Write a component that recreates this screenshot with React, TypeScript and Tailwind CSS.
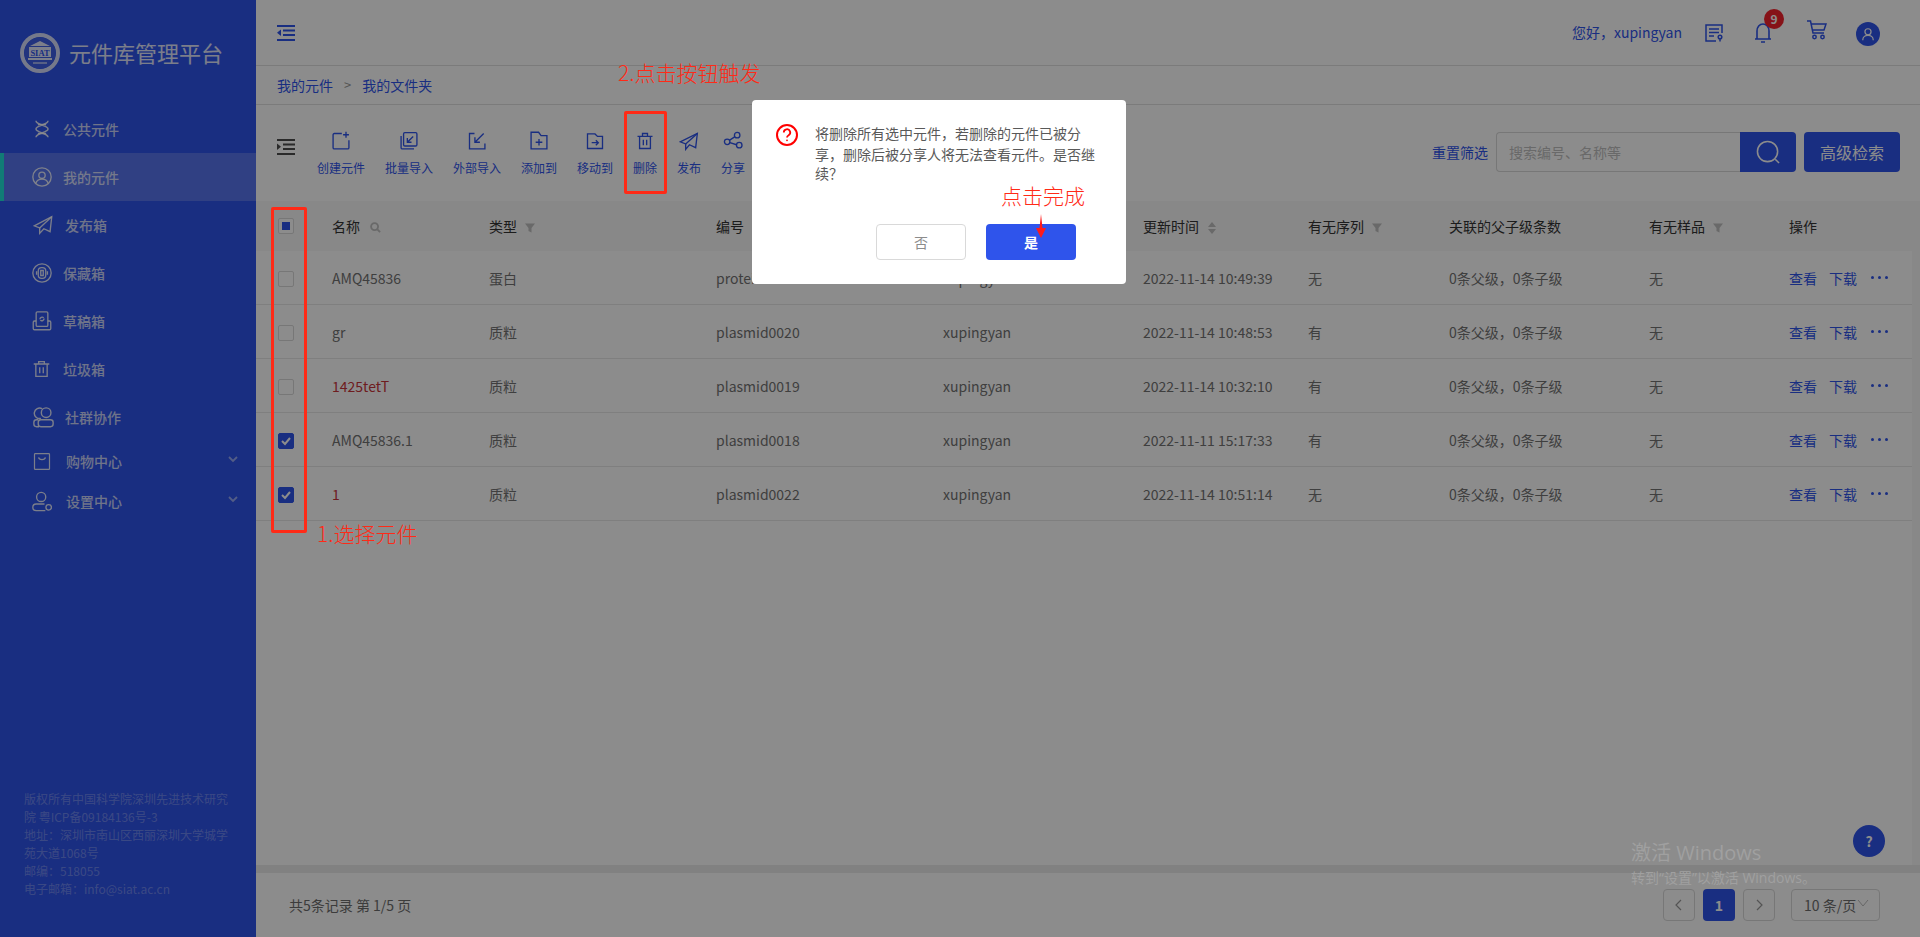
import React from "react";

const FONT = "font-['Noto_Sans_CJK_SC','Noto_Sans',sans-serif]";

type IP = { className?: string };
const S = ({ children, className, vb = "0 0 24 24" }: { children: React.ReactNode; className?: string; vb?: string }) => (
  <svg viewBox={vb} fill="none" stroke="currentColor" strokeWidth="1.6" className={className}>
    {children}
  </svg>
);

const Dna = (p: IP) => (
  <S {...p}><path d="M4 1c0 6 16 6 16 11S4 17 4 23M20 1c0 6-16 6-16 11s16 5 16 11" strokeWidth="2" /><path d="M6.500 6h11M6.500 18h11" strokeWidth="2" /></S>
);
const UserCircle = (p: IP) => (
  <S {...p}><circle cx="12" cy="12" r="11" /><circle cx="12" cy="10" r="3.800" /><path d="M4.500 20c1-4 4-5.500 7.500-5.500s6.500 1.500 7.500 5.500" /></S>
);
const Plane = (p: IP) => (
  <S {...p}><path d="M1.500 13 22.500 2l-2 18-7.500-3.500L8 22v-6.500z" /><path d="M22.500 2 8 15.500" /></S>
);
const Seal = (p: IP) => (
  <S {...p}><circle cx="12" cy="12" r="11" /><rect x="7.500" y="5.500" width="9" height="13" rx="4" /><path d="M10.500 9h3v6h-3zM5.500 10v4M18.500 10v4" /></S>
);
const Draft = (p: IP) => (
  <S {...p}><rect x="5" y="1" width="14" height="17.500" rx="1.500" /><path d="M5 12H3a1.500 1.500 0 0 0-1.500 1.500V21A1.500 1.500 0 0 0 3 22.500h18a1.500 1.500 0 0 0 1.500-1.500v-7.500A1.500 1.500 0 0 0 21 12h-2" /><path d="M9.500 10a2.700 2.700 0 0 1 4.500-2M14.500 9a2.700 2.700 0 0 1-4.500 2" /></S>
);
const Trash = (p: IP) => (
  <S {...p}><path d="M1 5h22M8 5V1.500h8V5M4 5v17.500h16V5M9.500 9.500V18M14.500 9.500V18" strokeWidth="1.900" /></S>
);
const Group = (p: IP) => (
  <S {...p}><circle cx="15" cy="6.500" r="5.500" /><path d="M9 13a6 6 0 1 1 1.500-11" /><rect x="6" y="14.500" width="17" height="8" rx="3" /><path d="M6 14.500H4a3 3 0 0 0-3 3v2a3 3 0 0 0 3 3h3" /></S>
);
const Bag = (p: IP) => (
  <S {...p}><rect x="2" y="1.500" width="20" height="21" rx="1" /><path d="M7.500 6.500c.5 4 8.500 4 9 0" /></S>
);
const UserSet = (p: IP) => (
  <S {...p}><circle cx="11" cy="6.500" r="5.500" /><path d="M15 15H5a3.700 3.700 0 0 0 0 8h11" /><circle cx="20" cy="19" r="3.300" /></S>
);
const Chevron = (p: IP) => (
  <S {...p} vb="0 0 12 12"><path d="m2 4 4 4 4-4" strokeWidth="1.800" /></S>
);
const Indent = (p: IP) => (
  <S {...p} vb="0 0 18 16"><path d="M0 1h18M6 5.500h12M6 10h12M0 15h18" strokeWidth="1.800" /><path d="M0 4.500 4 7.750 0 11z" fill="currentColor" stroke="none" /></S>
);
const Outdent = (p: IP) => (
  <S {...p} vb="0 0 18 16"><path d="M0 1h18M6 5.500h12M6 10h12M0 15h18" strokeWidth="1.800" /><path d="M4 4.500 0 7.750 4 11z" fill="currentColor" stroke="none" /></S>
);

const menu: { t: string; I: (p: IP) => React.ReactElement; ml: string; tl: string; h: string; active?: boolean; chev?: boolean; ic: string }[] = [
  { t: "公共元件", I: Dna, ml: "ml-[33px]", tl: "ml-[7px]", ic: "w-[18px] h-[18px]", h: "h-[48px]" },
  { t: "我的元件", I: UserCircle, ml: "ml-[32px]", tl: "ml-[8px]", ic: "w-[20px] h-[20px]", h: "h-[48px]", active: true },
  { t: "发布箱", I: Plane, ml: "ml-[33px]", tl: "ml-[9px]", ic: "w-[20px] h-[20px]", h: "h-[48px]" },
  { t: "保藏箱", I: Seal, ml: "ml-[32px]", tl: "ml-[8px]", ic: "w-[20px] h-[20px]", h: "h-[48px]" },
  { t: "草稿箱", I: Draft, ml: "ml-[32px]", tl: "ml-[8px]", ic: "w-[20px] h-[20px]", h: "h-[48px]" },
  { t: "垃圾箱", I: Trash, ml: "ml-[33px]", tl: "ml-[7px]", ic: "w-[17px] h-[18px]", h: "h-[48px]" },
  { t: "社群协作", I: Group, ml: "ml-[32px]", tl: "ml-[10px]", ic: "w-[23px] h-[21px]", h: "h-[48px]" },
  { t: "购物中心", I: Bag, ml: "ml-[33px]", tl: "ml-[10px]", ic: "w-[18px] h-[19px]", h: "h-[40px]", chev: true },
  { t: "设置中心", I: UserSet, ml: "ml-[32px]", tl: "ml-[11px]", ic: "w-[20px] h-[21px]", h: "h-[40px]", chev: true },
];

const Sidebar = () => (
  <aside className="w-[256px] shrink-0 h-[937px] bg-[#2f54eb] text-white/85 flex flex-col relative">
    <div className="h-[105px] flex items-start pl-[20px] pt-[33px]">
      <svg viewBox="0 0 40 40" className="w-[40px] h-[40px]">
        <circle cx="20" cy="20" r="18" fill="none" stroke="white" strokeOpacity=".8" strokeWidth="4" />
        <circle cx="20" cy="20" r="15.500" fill="#3f60e6" />
        <path d="M10 13h20l-10-5z" fill="white" fillOpacity=".85" />
        <rect x="9" y="14" width="22" height="10" fill="white" fillOpacity=".85" />
        <text x="20" y="23" textAnchor="middle" fontSize="8.500" fontWeight="700" fill="#2f54eb" fontFamily="Liberation Serif, serif">SIAT</text>
        <rect x="8" y="25" width="24" height="2" fill="white" fillOpacity=".85" />
        <rect x="13" y="29" width="14" height="2" fill="white" fillOpacity=".5" />
      </svg>
      <span className="ml-[9px] mt-[3px] text-[22px] leading-[32px] text-white/85">元件库管理平台</span>
    </div>
    {menu.map((m) => (
      <div key={m.t} className={`${m.h} flex items-center relative ${m.active ? "bg-white/20" : ""}`}>
        {m.active && <span className="absolute left-0 top-0 bottom-0 w-[4px] bg-[#1fe0d8]" />}
        <span className={`${m.ml} flex items-center w-[23px]`}><m.I className={`${m.ic} shrink-0`} /></span>
        <span className={`text-[14px] font-medium text-white/75 ${m.tl}`}>{m.t}</span>
        {m.chev && <Chevron className="absolute left-[227px] top-[12px] w-[12px] h-[12px] text-white/50" />}
      </div>
    ))}
    <div className="mt-auto mb-[39px] pl-[24px] w-[232px] text-[12px] leading-[18px] text-white/30">
      版权所有中国科学院深圳先进技术研究院 粤ICP备09184136号-3<br />
      地址：深圳市南山区西丽深圳大学城学苑大道1068号<br />
      邮编：518055<br />
      电子邮箱：info@siat.ac.cn
    </div>
  </aside>
);

const tools: { t: string; d: React.ReactNode }[] = [
  { t: "创建元件", d: <><path d="M13 3H4a1.500 1.500 0 0 0-1.500 1.500V20A1.500 1.500 0 0 0 4 21.500h16a1.500 1.500 0 0 0 1.500-1.500v-9" /><path d="M18 1v7M14.500 4.500h7" /></> },
  { t: "批量导入", d: <><rect x="5.500" y="2" width="16" height="16" rx="1.500" /><path d="M2.500 6v14a1.500 1.500 0 0 0 1.500 1.500h14" /><path d="M17 6.500 10 13.500M10 8.500v5h5" /></> },
  { t: "外部导入", d: <><path d="M9 3H3v18.500h18.500V15" /><path d="M20 3 9.500 13.500M9.500 7.500v6h6" /></> },
  { t: "添加到", d: <><path d="M2.500 1.500h9l3 4h7v16h-19z" /><path d="M12 9.500v8M8 13.500h8" /></> },
  { t: "移动到", d: <><path d="M3 3.500h9l3 3h6v14.500H3z" /><path d="M8 14h8M13 11l3 3-3 3" /></> },
  { t: "删除", d: <path d="M3 6.500h18M9 6.500V3h6v3.500M5.500 6.500V21h13V6.500M10 10.500v6.500M14 10.500v6.500" /> },
  { t: "发布", d: <><path d="M1.500 13 22 3l-2 17-7.500-3.500L8 22v-6.500z" /><path d="M22 3 8 15.500" /></> },
  { t: "分享", d: <><circle cx="17" cy="5" r="3.300" /><circle cx="5" cy="13" r="3.300" /><circle cx="19.500" cy="17" r="3.300" /><path d="m8 11 6-4M8.300 14l8 2.500" /></> },
];

const cols = "grid grid-cols-[76px_157px_227px_227px_200px_165px_141px_200px_140px_1fr] items-center";

const Funnel = () => (
  <svg viewBox="0 0 10 10" className="inline-block ml-[8px] w-[10px] h-[10px] text-[#bfbfbf]"><path d="M0 .5h10L6.500 5v4.500L3.500 8V5z" fill="currentColor" /></svg>
);
const SortIcon = () => (
  <svg viewBox="0 0 10 14" className="inline-block ml-[8px] w-[10px] h-[14px] text-[#bfbfbf]"><path d="M5 1 9 6H1zM5 13 1 8h8z" fill="currentColor" /></svg>
);
const Mag = () => (
  <svg viewBox="0 0 12 12" className="inline-block ml-[10px] w-[11px] h-[11px] text-[#bfbfbf]" fill="none" stroke="currentColor" strokeWidth="2"><circle cx="5" cy="5" r="3.800" /><path d="m8 8 3 3" /></svg>
);

const rows = [
  { n: "AMQ45836", ty: "蛋白", id: "protein0017", dt: "2022-11-14 10:49:39", s: "无", c: false, red: false },
  { n: "gr", ty: "质粒", id: "plasmid0020", dt: "2022-11-14 10:48:53", s: "有", c: false, red: false },
  { n: "1425tetT", ty: "质粒", id: "plasmid0019", dt: "2022-11-14 10:32:10", s: "有", c: false, red: true },
  { n: "AMQ45836.1", ty: "质粒", id: "plasmid0018", dt: "2022-11-11 15:17:33", s: "有", c: true, red: false },
  { n: "1", ty: "质粒", id: "plasmid0022", dt: "2022-11-14 10:51:14", s: "无", c: true, red: true },
];

const Check = ({ on }: { on: boolean }) => (
  <span className={`ml-[22px] w-[16px] h-[16px] rounded-[2px] flex items-center justify-center border ${on ? "bg-[#2f54eb] border-[#2f54eb]" : "bg-white border-[#d9d9d9]"}`}>
    {on && (
      <svg viewBox="0 0 12 12" className="w-[12px] h-[12px]" fill="none" stroke="white" strokeWidth="2"><path d="m2 6 3 3 5-6" /></svg>
    )}
  </span>
);

const Main = () => (
  <main className="flex-1 h-[937px] flex flex-col bg-white min-w-0">
    <header className="h-[66px] shrink-0 border-b border-[#e0e0e0] flex items-center pl-[21px] pr-[40px] text-[#2f54eb]">
      <Outdent className="w-[18px] h-[16px] text-[#2f54eb]" />
      <span className="ml-auto text-[14px] translate-x-[1px]">您好，xupingyan</span>
      <svg viewBox="0 0 18 18" className="ml-[24px] w-[18px] h-[18px]" fill="none" stroke="currentColor" strokeWidth="1.500"><path d="M17 9V1H1v16h10M4 5h10M4 8.500h10M4 12h5" /><circle cx="15" cy="13" r="1.800" /><path d="M15 15v2.500" /></svg>
      <span className="ml-[31px] relative w-[18px] h-[22px]">
        <svg viewBox="0 0 18 22" className="w-[18px] h-[22px]" fill="none" stroke="currentColor" strokeWidth="1.600"><path d="M3 17V9c0-4 2.500-7 6-7s6 3 6 7v8M1 17h16M7 20h4" /></svg>
        <span className="absolute left-[10px] -top-[13px] w-[20px] h-[20px] rounded-full bg-[#f5222d] text-white text-[12px] font-bold flex items-center justify-center">9</span>
      </span>
      <svg viewBox="0 0 20 20" className="ml-[35px] w-[20px] h-[20px] -translate-y-[3px]" fill="none" stroke="currentColor" strokeWidth="1.500"><path d="M0 1h3.500L6 13h11M4 4h15l-2 6H5.500" /><circle cx="7.500" cy="17" r="1.700" /><circle cx="15.500" cy="17" r="1.700" /></svg>
      <span className="ml-[29px] w-[24px] h-[24px] rounded-full bg-[#2f54eb] flex items-center justify-center translate-y-[1px]">
        <svg viewBox="0 0 16 16" className="w-[14px] h-[14px]" fill="none" stroke="white" strokeWidth="1.400"><circle cx="8" cy="5.500" r="3.500" /><path d="M2 15c0-3.500 3-5.500 6-5.500s6 2 6 5.500" /></svg>
      </span>
    </header>
    <div className="h-[39px] shrink-0 border-b border-[#e0e0e0] flex items-center pl-[21px] text-[14px] text-[#2f54eb]">
      我的元件<span className="mx-[11px] text-[#999] text-[13px]">&gt;</span>我的文件夹
    </div>
    <div className="h-[96px] shrink-0 flex items-start pl-[21px] pr-[20px]">
      <Indent className="mt-[34px] w-[18px] h-[16px] text-[#4d4d4d]" />
      <div className="ml-[22px] mt-[26px] flex gap-[20px]">
        {tools.map((t) => (
          <div key={t.t} className="flex flex-col items-center text-[#2f54eb]">
            <S className="w-[20px] h-[20px]">{t.d}</S>
            <span className="text-[12px] leading-[18px] mt-[8px] whitespace-nowrap">{t.t}</span>
          </div>
        ))}
      </div>
      <div className="ml-auto mt-[27px] flex items-center">
        <span className="text-[14px] text-[#2f54eb] mr-[8px]">重置筛选</span>
        <div className="w-[244px] h-[40px] border border-r-0 border-[#d9d9d9] rounded-l-[4px] flex items-center pl-[12px] text-[14px] text-[#bfbfbf]">搜索编号、名称等</div>
        <div className="w-[56px] h-[40px] bg-[#2f54eb] rounded-r-[4px] flex items-center justify-center">
          <svg viewBox="0 0 26 26" className="w-[25px] h-[25px]" fill="none" stroke="white" strokeWidth="1.600"><circle cx="12" cy="12" r="10.500" /><path d="m20 20 4 4" /></svg>
        </div>
        <div className="ml-[8px] w-[96px] h-[40px] bg-[#2f54eb] rounded-[4px] text-white text-[16px] flex items-center justify-center">高级检索</div>
      </div>
    </div>
    <div className="flex-1 flex flex-col bg-[#f7f7f7] min-h-0">
      <div className={`${cols} h-[50px] shrink-0 text-[14px] text-[#333]`}>
        <span className="ml-[22px] w-[16px] h-[16px] rounded-[2px] border border-[#d9d9d9] bg-white flex items-center justify-center"><span className="w-[8px] h-[8px] bg-[#2f54eb]" /></span>
        <span>名称<Mag /></span>
        <span>类型<Funnel /></span>
        <span>编号</span>
        <span>创建人</span>
        <span>更新时间<SortIcon /></span>
        <span>有无序列<Funnel /></span>
        <span>关联的父子级条数</span>
        <span>有无样品<Funnel /></span>
        <span>操作</span>
      </div>
      <div className="flex-1 mr-[8px] bg-white">
        {rows.map((r) => (
          <div key={r.id} className={`${cols} h-[54px] pt-[2px] border-b border-[#e8e8e8] text-[14px] text-[#737373]`}>
            <Check on={r.c} />
            <span className={r.red ? "text-[#c9343a]" : ""}>{r.n}</span>
            <span>{r.ty}</span>
            <span>{r.id}</span>
            <span>xupingyan</span>
            <span>{r.dt}</span>
            <span>{r.s}</span>
            <span>0条父级，0条子级</span>
            <span>无</span>
            <span className="flex items-center text-[#2f54eb] whitespace-nowrap">
              查看<span className="ml-[12px]">下载</span>
              <span className="ml-[14px] flex gap-[4px] -translate-y-[1px]">
                <i className="block w-[3px] h-[3px] rounded-full bg-[#2f54eb]" />
                <i className="block w-[3px] h-[3px] rounded-full bg-[#2f54eb]" />
                <i className="block w-[3px] h-[3px] rounded-full bg-[#2f54eb]" />
              </span>
            </span>
          </div>
        ))}
      </div>
    </div>
    <div className="h-[8px] shrink-0 bg-[#ececec]" />
    <footer className="h-[64px] shrink-0 flex items-center pl-[33px] pr-[40px] text-[14px] text-[#6e6e6e]">
      <span>共5条记录 第 1/5 页</span>
      <span className="ml-auto w-[32px] h-[32px] border border-[#d9d9d9] rounded-[4px] flex items-center justify-center">
        <svg viewBox="0 0 12 12" className="w-[12px] h-[12px]" fill="none" stroke="#999" strokeWidth="1.200"><path d="M8 1 3 6l5 5" /></svg>
      </span>
      <span className="ml-[8px] w-[32px] h-[32px] bg-[#2f54eb] rounded-[4px] text-white text-[14px] font-bold flex items-center justify-center">1</span>
      <span className="ml-[8px] w-[32px] h-[32px] border border-[#d9d9d9] rounded-[4px] flex items-center justify-center">
        <svg viewBox="0 0 12 12" className="w-[12px] h-[12px]" fill="none" stroke="#999" strokeWidth="1.200"><path d="m4 1 5 5-5 5" /></svg>
      </span>
      <span className="ml-[16px] w-[89px] h-[32px] border border-[#d9d9d9] rounded-[4px] flex items-center pl-[12px] whitespace-nowrap">
        10 条/页
        <svg viewBox="0 0 12 12" className="w-[12px] h-[12px] ml-[1px] -translate-y-[2px]" fill="none" stroke="#bbb" strokeWidth="1"><path d="m1 3 5 6 5-6" /></svg>
      </span>
    </footer>
  </main>
);

export default function App() {
  return (
    <div className={`relative w-[1920px] h-[937px] overflow-hidden flex ${FONT}`}>
      <Sidebar />
      <Main />
      <div className="absolute left-[1853px] top-[825px] w-[32px] h-[32px] rounded-full bg-[#2f54eb] text-white text-[14px] font-bold flex items-center justify-center">?</div>

      {/* dimming mask */}
      <div className="absolute inset-0 bg-black/45" />

      {/* dialog */}
      <div className="absolute left-[752px] top-[100px] w-[374px] h-[184px] bg-white rounded-[4px] pl-[24px] pt-[24px] flex items-start">
        <svg viewBox="0 0 22 22" className="w-[22px] h-[22px] shrink-0" fill="none" stroke="#ff0000" strokeWidth="2"><circle cx="11" cy="11" r="10" /><path d="M7.800 8.500a3.200 3.200 0 1 1 4.800 2.700c-1 .6-1.600 1.200-1.600 2.300" strokeWidth="1.800" /><circle cx="11" cy="16.300" r=".9" fill="#ff0000" stroke="none" /></svg>
        <div className="ml-[17px] w-[288px] -mt-[1px] text-[14px] leading-[21px] text-[#595959]">
          <div>将删除所有选中元件，若删除的元件已被分享，删除后被分享人将无法查看元件。是否继</div>
          <div className="-mt-[2px]">续？</div>
        </div>
      </div>
      <div className="absolute left-[876px] top-[224px] w-[90px] h-[36px] rounded-[4px] border border-[#d9d9d9] bg-white text-[14px] text-[#8c8c8c] flex items-center justify-center">否</div>
      <div className="absolute left-[986px] top-[224px] w-[90px] h-[36px] rounded-[4px] bg-[#2f54eb] text-[14px] font-bold text-white flex items-center justify-center">是</div>

      {/* annotations */}
      <div className="absolute left-[271px] top-[207px] w-[36px] h-[326px] border-[3px] border-[#ff2a17] rounded-[2px]" />
      <div className="absolute left-[624px] top-[111px] w-[43px] h-[83px] border-[3px] border-[#ff2a17] rounded-[2px]" />
      <div className="absolute left-[618px] top-[57px] text-[21px] leading-[30px] font-light text-[#ff2a17] whitespace-nowrap">2.点击按钮触发</div>
      <div className="absolute left-[317px] top-[518px] text-[21px] leading-[30px] font-light text-[#ff2a17] whitespace-nowrap">1.选择元件</div>
      <div className="absolute left-[1001px] top-[180px] text-[21px] leading-[30px] font-light text-[#ff2a17] whitespace-nowrap">点击完成</div>
      <svg viewBox="0 0 10 24" className="absolute left-[1036px] top-[214px] w-[10px] h-[24px]"><path d="M5 0 6.500 14H10L5 24 0 14H3.500z" fill="#ff1a1a" /></svg>

      {/* watermark */}
      <div className="absolute left-[1631px] top-[838px] text-[#a0a0a0] whitespace-nowrap font-['Open_Sans','Noto_Sans_CJK_SC',sans-serif]">
        <div className="text-[20px] leading-[30px]">激活 Windows</div>
        <div className="text-[14px] leading-[20px]">转到“设置”以激活 Windows。</div>
      </div>
    </div>
  );
}
